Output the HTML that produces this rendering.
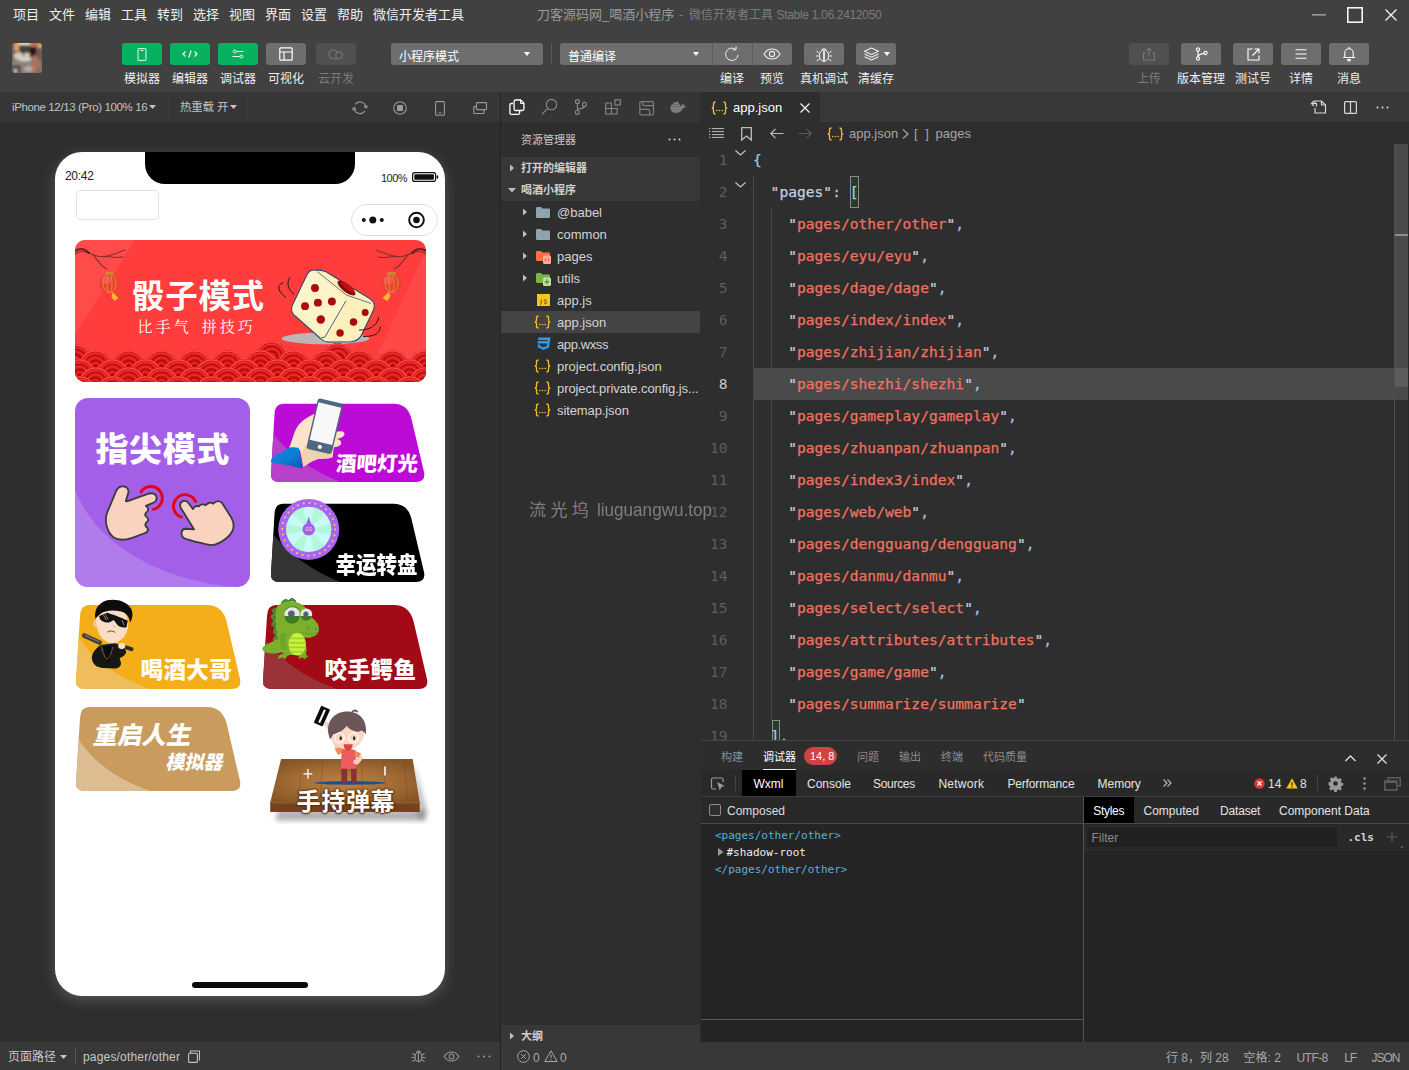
<!DOCTYPE html>
<html lang="zh-CN">
<head>
<meta charset="utf-8">
<title>微信开发者工具</title>
<style>
*{box-sizing:border-box;margin:0;padding:0}
html,body{width:1409px;height:1070px;overflow:hidden;background:#2e2e2e}
body{font-family:"Liberation Sans","Noto Sans CJK SC",sans-serif;font-size:12px;color:#e8e8e8;position:relative}
.abs{position:absolute}
.t{position:absolute;white-space:nowrap;line-height:1}
svg{position:absolute;overflow:visible}
/* top */
#menubar{position:absolute;left:0;top:0;width:1409px;height:30px;background:#414141}
#menubar .m{position:absolute;top:8px;font-size:13px;line-height:14px;color:#f0f0f0;white-space:nowrap}
#toolbar{position:absolute;left:0;top:30px;width:1409px;height:62px;background:#414141}
.btn{position:absolute;top:13px;width:40px;height:22px;border-radius:3px;background:#6e6e6e}
.btn.g{background:#07b160}
.btn.d{background:#505050}
.lbl{position:absolute;top:42px;font-size:12px;line-height:14px;color:#f0f0f0;white-space:nowrap;transform:translateX(-50%)}
.lbl.d{color:#7a7a7a}
.sel{position:absolute;top:13px;height:22px;background:#6e6e6e;border-radius:3px;font-size:12px;line-height:28px;color:#fff;padding-left:8px;white-space:nowrap}
</style>
</head>
<body>
<div id="menubar">
<span class="m" style="left:13px">项目</span>
<span class="m" style="left:49px">文件</span>
<span class="m" style="left:85px">编辑</span>
<span class="m" style="left:121px">工具</span>
<span class="m" style="left:157px">转到</span>
<span class="m" style="left:193px">选择</span>
<span class="m" style="left:229px">视图</span>
<span class="m" style="left:265px">界面</span>
<span class="m" style="left:301px">设置</span>
<span class="m" style="left:337px">帮助</span>
<span class="m" style="left:373px">微信开发者工具</span>
<span class="m" id="title" style="left:537px;color:#9a9a9a">刀客源码网_喝酒小程序</span><span class="m" id="title2" style="left:679px;color:#7c7c7c;font-size:12px">-</span><span class="m" style="left:689px;color:#7c7c7c;font-size:12px">微信开发者工具</span><span class="m" id="title3" style="left:776.500px;color:#7c7c7c;font-size:12px;letter-spacing:-0.310px">Stable 1.06.2412050</span>
<svg style="left:1312px;top:14px" width="14" height="2"><rect width="14" height="1.6" fill="#9a9a9a"/></svg>
<svg style="left:1347px;top:7px" width="16" height="16"><rect x="0.8" y="0.8" width="14.4" height="14.4" fill="none" stroke="#f4f4f4" stroke-width="1.6"/></svg>
<svg style="left:1385px;top:9px" width="12" height="12"><path d="M0.5 0.5L11.5 11.5M11.5 0.5L0.5 11.5" stroke="#f4f4f4" stroke-width="1.3" fill="none"/></svg>
</div>
<div id="toolbar">
<!-- avatar -->
<div class="abs" id="avatar" style="left:12px;top:13px;width:30px;height:30px;border-radius:3px;overflow:hidden;background:#6a5c58">
<svg style="left:0;top:0" width="30" height="30" viewBox="0 0 30 30"><defs><filter id="avb" x="-30%" y="-30%" width="160%" height="160%"><feGaussianBlur stdDeviation="1.300"/></filter></defs>
<rect width="30" height="30" fill="#6e605c"/>
<g filter="url(#avb)">
<rect x="5" y="-1" width="14" height="3" fill="#f0e6d0"/>
<rect x="2" y="0" width="5" height="8" fill="#e09a68"/>
<rect x="18" y="-1" width="9" height="5" fill="#b87048"/>
<rect x="26" y="0" width="4" height="6" fill="#e0a070"/>
<rect x="8" y="3" width="10" height="9" fill="#48403a"/>
<rect x="18" y="4" width="6" height="10" fill="#2a1614"/>
<rect x="25" y="5" width="5" height="14" fill="#6a5c54"/>
<ellipse cx="6.500" cy="13" rx="5" ry="4" fill="#d2c8bc"/>
<ellipse cx="15" cy="12" rx="3" ry="2.500" fill="#cfc4b4"/>
<path d="M0 16C6 18 14 15 21 19L21 30H0z" fill="#8c827e"/>
<ellipse cx="13" cy="16" rx="7" ry="2.500" fill="#d8d0c4"/>
<ellipse cx="17" cy="26" rx="5" ry="3" fill="#b4aa9c"/>
<path d="M21 12C26 12 28 18 27 22L25 30H20z" fill="#b07060"/>
<rect x="0" y="22" width="9" height="8" fill="#5c5254"/>
<rect x="2" y="26" width="3" height="4" fill="#c8bca4"/>
<rect x="27" y="18" width="3" height="12" fill="#8a7868"/>
</g></svg>
</div>
<!-- left buttons -->
<div class="btn g" style="left:122px"><svg style="left:15px;top:5px" width="10" height="13" viewBox="0 0 10 13"><rect x="1" y="0.600" width="8" height="11.800" rx="0.500" fill="none" stroke="#ecfaf2" stroke-width="1"/><path d="M3.500 2.600h3" stroke="#ecfaf2" stroke-width="1"/></svg></div>
<div class="btn g" style="left:170px"><svg style="left:12px;top:6px" width="16" height="10" viewBox="0 0 16 10"><path d="M3.5 2.5L1 5l2.5 2.5M12.5 2.5L15 5l-2.5 2.5M9.2 1.5L6.8 8.5" fill="none" stroke="#fff" stroke-width="1.1"/></svg></div>
<div class="btn g" style="left:218px"><svg style="left:14px;top:5px" width="12" height="12" viewBox="0 0 12 12"><path d="M4.500 3.500h7M0.500 8.500h7.200" stroke="#ecfaf2" stroke-width="1" fill="none"/><circle cx="2.800" cy="3.500" r="1.500" fill="none" stroke="#ecfaf2" stroke-width="1"/><circle cx="9.400" cy="8.500" r="1.500" fill="none" stroke="#ecfaf2" stroke-width="1"/></svg></div>
<div class="btn" style="left:266px"><svg style="left:13px;top:4px" width="14" height="14" viewBox="0 0 14 14"><rect x="0.8" y="0.8" width="12.4" height="12.4" rx="1" fill="none" stroke="#fff" stroke-width="1.2"/><path d="M0.8 5h12.4M5 5v8" stroke="#fff" stroke-width="1.2" fill="none"/></svg></div>
<div class="btn d" style="left:316px"><svg style="left:12px;top:5px" width="16" height="12" viewBox="0 0 16 12"><path d="M5.2 10.5a4.2 4.2 0 1 1 3.9-5.9 3.3 3.3 0 1 1 2.3 5.9z" fill="none" stroke="#777" stroke-width="1.1"/><path d="M9.1 4.6a3.3 3.3 0 0 0-.6 4.5" fill="none" stroke="#777" stroke-width="1.1"/></svg></div>
<span class="lbl" style="left:142px">模拟器</span>
<span class="lbl" style="left:190px">编辑器</span>
<span class="lbl" style="left:238px">调试器</span>
<span class="lbl" style="left:286px">可视化</span>
<span class="lbl d" style="left:336px">云开发</span>
<!-- selects -->
<div class="sel" style="left:391px;width:152px">小程序模式<svg style="left:133px;top:9px" width="6" height="4"><path d="M0 0h6L3 4z" fill="#fff"/></svg></div>
<div class="abs" style="left:551px;top:13px;width:1px;height:22px;background:#5a5a5a"></div>
<div class="sel" style="left:560px;width:232px">普通编译<svg style="left:133px;top:9px" width="6" height="4"><path d="M0 0h6L3 4z" fill="#fff"/></svg>
<div class="abs" style="left:152px;top:0;width:1px;height:22px;background:#5c5c5c"></div>
<div class="abs" style="left:192px;top:0;width:1px;height:22px;background:#5c5c5c"></div>
<!-- refresh -->
<svg style="left:164px;top:3px" width="16" height="16" viewBox="0 0 16 16"><path d="M14 8.800a6.200 6.200 0 1 1-2.600-5.600" fill="none" stroke="#eee" stroke-width="1"/><path d="M12 0.400v3.400h-3.400" fill="none" stroke="#eee" stroke-width="1"/></svg>
<!-- eye -->
<svg style="left:203px;top:5px" width="18" height="12" viewBox="0 0 18 12"><path d="M1 6c2-3.3 5-5 8-5s6 1.700 8 5c-2 3.300-5 5-8 5s-6-1.700-8-5z" fill="none" stroke="#eee" stroke-width="1.1"/><circle cx="9" cy="6" r="2.600" fill="none" stroke="#eee" stroke-width="1.1"/></svg>
</div>
<div class="btn" style="left:804px"><svg style="left:11px;top:3px" width="18" height="17" viewBox="0 0 18 17"><ellipse cx="9" cy="9.700" rx="4.500" ry="5.800" fill="none" stroke="#f0f0f0" stroke-width="1"/><path d="M9 4v11.500M6.300 4.800a2.800 2.800 0 0 1 5.400 0M4.700 7.500L1.500 5M4.500 10H1M4.800 12.800L1.500 15M13.300 7.500L16.500 5M13.500 10H17M13.200 12.800L16.500 15" fill="none" stroke="#f0f0f0" stroke-width="1"/><path d="M9 5v10" stroke="#f0f0f0" stroke-width="1.600"/></svg></div>
<div class="btn" style="left:856px"><svg style="left:7px;top:4px" width="17" height="14" viewBox="0 0 17 14"><path d="M8.500 1L15.500 4.200 8.500 7.400 1.500 4.200z" fill="none" stroke="#eee" stroke-width="1.1" stroke-linejoin="round"/><path d="M1.500 7L8.500 10.200 15.500 7M1.500 9.800L8.500 13 15.500 9.800" fill="none" stroke="#eee" stroke-width="1.1" stroke-linejoin="round"/></svg><svg style="left:28px;top:9px" width="6" height="4"><path d="M0 0h6L3 4z" fill="#fff"/></svg></div>
<span class="lbl" style="left:732px">编译</span>
<span class="lbl" style="left:772px">预览</span>
<span class="lbl" style="left:824px">真机调试</span>
<span class="lbl" style="left:876px">清缓存</span>
<!-- right buttons -->
<div class="btn d" style="left:1129px"><svg style="left:13px;top:4px" width="14" height="14" viewBox="0 0 14 14"><path d="M4 6H1.500v7h11V6H10M7 9.500V1.200M4.300 3.800L7 1.200l2.700 2.600" fill="none" stroke="#777" stroke-width="1.1"/></svg></div>
<div class="btn" style="left:1181px"><svg style="left:14px;top:4px" width="13" height="14" viewBox="0 0 13 14"><circle cx="3" cy="2.500" r="1.600" fill="none" stroke="#fff" stroke-width="1.100"/><circle cx="3" cy="11.500" r="1.600" fill="none" stroke="#fff" stroke-width="1.100"/><circle cx="10.500" cy="6" r="1.600" fill="none" stroke="#fff" stroke-width="1.100"/><path d="M3 4.100v5.800M3 9.900c0-2.500 3-3 6-3.500" fill="none" stroke="#fff" stroke-width="1.100"/></svg></div>
<div class="btn" style="left:1233px"><svg style="left:14px;top:5px" width="13" height="13" viewBox="0 0 13 13"><path d="M5.500 1H1v11h11V7.500" fill="none" stroke="#fff" stroke-width="1.100"/><path d="M7.500 1H12v4.500M12 1L5.500 7.500" fill="none" stroke="#fff" stroke-width="1.100"/></svg></div>
<div class="btn" style="left:1281px"><svg style="left:14px;top:6px" width="12" height="10" viewBox="0 0 12 10"><path d="M0.500 0.800h11M0.500 5h11M0.500 9.200h11" stroke="#fff" stroke-width="1.100"/></svg></div>
<div class="btn" style="left:1329px"><svg style="left:13px;top:3px" width="14" height="16" viewBox="0 0 14 16"><path d="M2.800 11.500V7a4.200 4.200 0 0 1 8.400 0v4.500M1 11.500h12M7 2.800V1M5.800 13.500h2.400v1.300H5.800z" fill="none" stroke="#fff" stroke-width="1.100"/></svg></div>
<span class="lbl d" style="left:1149px">上传</span>
<span class="lbl" style="left:1201px">版本管理</span>
<span class="lbl" style="left:1253px">测试号</span>
<span class="lbl" style="left:1301px">详情</span>
<span class="lbl" style="left:1349px">消息</span>
</div>
<style>
#simbar{position:absolute;left:0;top:92px;width:500px;height:30px;background:#363636}
#simbar .t{font-size:12px;color:#c4c4c4;top:9px}
#sim{position:absolute;left:0;top:122px;width:500px;height:920px;background:#2e2e2e;overflow:hidden}
#phone{position:absolute;left:55px;top:30px;width:390px;height:844px;border-radius:27px;background:#fff;box-shadow:0 4px 14px rgba(255,255,255,.2);overflow:hidden;color:#222}
#simfoot{position:absolute;left:0;top:1042px;width:500px;height:28px;background:#383838}
#simfoot .t{font-size:12px;color:#c8c8c8;top:9px}
.ct{position:absolute;white-space:nowrap;color:#fff;font-family:"Liberation Sans","Noto Sans CJK SC",sans-serif;font-weight:900;line-height:1}
.wv{position:absolute;left:0;width:400px;height:33px;background-size:33px 33px;background-repeat:repeat-x;background-image:radial-gradient(circle 16.500px at 16.500px 16.500px,#9c0808 0,#c40e0e 2px,#ec2c2c 3.500px,#c20c0c 5.500px,#b80a0a 6.500px,#ee3030 8.500px,#cc1010 10.500px,#c00c0c 11.500px,#f03434 13px,#d81414 14.500px,#ff5c54 15.500px,#e82222 16.400px,rgba(0,0,0,0) 16.600px)}
</style>
<div id="simbar">
<span class="t" style="left:12px;font-size:11.500px;letter-spacing:-0.380px;top:9.500px" id="devname">iPhone 12/13 (Pro) 100% 16</span>
<svg style="left:149px;top:13px" width="7" height="4"><path d="M0 0h7L3.500 4z" fill="#c4c4c4"/></svg>
<div class="abs" style="left:168px;top:0;width:1px;height:30px;background:#3b3b3b"></div>
<span class="t" style="left:180px;font-size:11.500px;letter-spacing:-0.200px;top:9.500px">热重载 开</span>
<svg style="left:229.500px;top:13px" width="7" height="4"><path d="M0 0h7L3.500 4z" fill="#c4c4c4"/></svg>
<div class="abs" style="left:247px;top:0;width:1px;height:30px;background:#3b3b3b"></div>
<!-- refresh -->
<svg style="left:0;top:0" width="500" height="30" viewBox="0 0 500 30" fill="none"><path d="M355.200 12.400A6 6 0 0 1 366 15.800M364.800 19.200A6 6 0 0 1 354 15.800" stroke="#9a9a9a" stroke-width="1.100"/><path d="M366 16.200l-2-2.400M366 16.200l1.600-2.600M354 15.400l2 2.400M354 15.400l-1.600 2.600" stroke="#9a9a9a" stroke-width="1.100"/></svg>
<!-- stop -->
<svg style="left:393px;top:9px" width="14" height="14" viewBox="0 0 14 14"><circle cx="7" cy="7" r="6.300" fill="none" stroke="#9a9a9a" stroke-width="1.100"/><rect x="4" y="4" width="6" height="6" rx="1" fill="#9a9a9a"/></svg>
<!-- phone -->
<svg style="left:435px;top:8.500px" width="10" height="15" viewBox="0 0 10 15"><rect x="0.600" y="0.600" width="8.800" height="13.600" rx="1" fill="none" stroke="#9a9a9a" stroke-width="1.100"/><path d="M3.500 12h3" stroke="#9a9a9a" stroke-width="1.100"/></svg>
<!-- windows -->
<svg style="left:0;top:0" width="500" height="30" viewBox="0 0 500 30" fill="none"><rect x="476.500" y="10.600" width="10" height="7" rx="0.800" stroke="#9a9a9a" stroke-width="1.100"/><path d="M476.500 14.600H474.600Q473.800 14.600 473.800 15.400V20.700Q473.800 21.500 474.600 21.500H483.200Q484 21.500 484 20.700V17.600" stroke="#9a9a9a" stroke-width="1.100"/></svg>
</div>
<div id="sim">
<div id="phone">
<!-- notch -->
<div class="abs" style="left:90px;top:0;width:210px;height:32px;background:#000;border-radius:0 0 20px 20px"></div>
<span class="t" style="left:10px;top:18px;font-size:12px;color:#222;letter-spacing:-0.3px">20:42</span>
<span class="t" style="left:326px;top:20.500px;font-size:11px;color:#222;letter-spacing:-0.550px">100%</span>
<svg style="left:357px;top:20px" width="27" height="10" viewBox="0 0 27 10"><rect x="0.600" y="0.600" width="23" height="8.800" rx="2.200" fill="none" stroke="#111" stroke-width="1.200"/><rect x="2.300" y="2.300" width="19.600" height="5.400" rx="1" fill="#111"/><rect x="24.600" y="3.300" width="1.600" height="3.400" rx="0.800" fill="#111"/></svg>
<!-- nav -->
<div class="abs" style="left:21px;top:38px;width:83px;height:30px;border:1px solid #e4e4e4;border-radius:4px"></div>
<div class="abs" style="left:296px;top:52px;width:87px;height:32px;border:1px solid #e0e0e0;border-radius:16px;background:#fff"></div>
<svg style="left:296px;top:52px" width="87" height="32" viewBox="0 0 87 32"><circle cx="12.800" cy="16" r="2" fill="#111"/><circle cx="21.800" cy="16" r="3.500" fill="#111"/><circle cx="30.800" cy="16" r="2" fill="#111"/><circle cx="65.500" cy="16" r="7.300" fill="none" stroke="#111" stroke-width="2"/><circle cx="65.500" cy="16" r="3.300" fill="#111"/></svg>
<!-- banner -->
<div class="abs" id="banner" style="left:20px;top:88px;width:351px;height:142px;border-radius:10px;background:#ff3d3d;overflow:hidden">
<svg style="left:0;top:0" width="351" height="142" viewBox="0 0 351 142">
<path d="M0 0H60L0 95z" fill="#ff5250" opacity=".7"/>
<path d="M351 10L290 142H351z" fill="#ff5250" opacity=".6"/>
<!-- branches -->
<path d="M0 14c8-6 14 0 22 2s18-2 28-6M18 15c6 6 8 12 14 14M28 17c6-2 12 2 20 0" fill="none" stroke="#6a2a22" stroke-width="1.100" stroke-linecap="round" opacity=".8"/>
<path d="M0 11c6-4 10-2 14 2" fill="none" stroke="#4a1a16" stroke-width="2" stroke-linecap="round" opacity=".85"/>
<path d="M351 14c-8-6-14 0-22 2s-18-2-28-6M333 15c-6 6-8 12-14 14M323 17c-6-2-12 2-20 0" fill="none" stroke="#6a2a22" stroke-width="1.100" stroke-linecap="round" opacity=".8"/>
<path d="M351 11c-6-4-10-2-14 2" fill="none" stroke="#4a1a16" stroke-width="2" stroke-linecap="round" opacity=".85"/>
<!-- lanterns -->
<g transform="translate(34.500,43)"><ellipse cx="0" cy="0" rx="10.500" ry="9.500" fill="#e8432c"/><ellipse cx="0" cy="0" rx="6.500" ry="9.500" fill="none" stroke="#f2934a" stroke-width="0.800"/><ellipse cx="0" cy="0" rx="2.500" ry="9.500" fill="none" stroke="#f2934a" stroke-width="0.800"/><ellipse cx="-3" cy="-3" rx="5" ry="4" fill="#f4705a" opacity=".6"/><rect x="-4" y="-11" width="8" height="2.500" fill="#c98a2a"/><path d="M3 9l6 6-4 3-3-4z" fill="#f7b733"/></g>
<g transform="translate(316.500,43)"><ellipse cx="0" cy="0" rx="10.500" ry="9.500" fill="#e8432c"/><ellipse cx="0" cy="0" rx="6.500" ry="9.500" fill="none" stroke="#f2934a" stroke-width="0.800"/><ellipse cx="0" cy="0" rx="2.500" ry="9.500" fill="none" stroke="#f2934a" stroke-width="0.800"/><ellipse cx="-3" cy="-3" rx="5" ry="4" fill="#f4705a" opacity=".6"/><rect x="-4" y="-11" width="8" height="2.500" fill="#c98a2a"/><path d="M-3 9l-6 6 5 3 3-5z" fill="#f7b733"/></g>
<!-- dice -->
<g transform="translate(195,20) scale(0.11679)">
<ellipse cx="475" cy="672" rx="375" ry="50" fill="#bab6b6"/>
<path d="M390 88C350 80 330 100 315 130L195 380C180 410 180 440 200 465L430 670C450 690 470 700 500 702L690 700C730 698 760 680 780 650L880 440C900 400 895 360 860 335L480 100C450 85 420 85 390 88Z" fill="#fbf0bc" stroke="#27407a" stroke-width="9" stroke-linejoin="round"/>
<path d="M400 100L650 350L470 660L215 440C195 420 195 400 205 380L320 135C340 100 370 92 400 100Z" fill="#fdf4cc"/>
<path d="M650 350L470 660M470 660L440 665" fill="none" stroke="#27407a" stroke-width="7"/>
<path d="M405 100L655 300L865 372" fill="none" stroke="#27407a" stroke-width="6"/>
<ellipse cx="655" cy="240" rx="95" ry="34" transform="rotate(38 655 240)" fill="#8a0808"/>
<ellipse cx="665" cy="232" rx="70" ry="20" transform="rotate(38 665 232)" fill="#c01010"/>
<g fill="#a80c0c"><circle cx="385" cy="240" r="34"/><circle cx="300" cy="395" r="34"/><circle cx="410" cy="365" r="34"/><circle cx="530" cy="355" r="34"/><circle cx="435" cy="510" r="36"/><circle cx="815" cy="450" r="30"/><circle cx="715" cy="530" r="32"/><circle cx="600" cy="625" r="32"/></g>
<path d="M170 150C140 190 150 250 205 295M110 195C50 220 70 270 135 320M930 490C920 560 860 600 765 600M945 575C935 640 880 655 800 655" fill="none" stroke="#2a0e0e" stroke-width="8" stroke-linecap="round"/>
</g>
</svg>
<div class="wv" style="top:101px;left:180px;width:33px"></div>
<div class="wv" style="top:103px;left:246px;width:33px"></div>
<div class="wv" style="top:104px;left:-16px;width:33px"></div>
<div class="wv" style="top:110px;left:-29px"></div>
<div class="wv" style="top:118.500px;left:-12.500px"></div>
<div class="wv" style="top:127px;left:-29px"></div>
<div class="wv" style="top:135.500px;left:-12.500px"></div>
<span class="ct" style="left:57px;top:40.500px;font-size:32.500px;letter-spacing:0.700px;font-weight:700">骰子模式</span>
<span class="ct" style="left:62.500px;top:80px;font-size:15px;font-weight:400;letter-spacing:3.100px;font-family:'Liberation Serif','Noto Serif CJK SC',serif;word-spacing:3px">比手气 拼技巧</span>
</div>
<!-- purple card -->
<div class="abs" style="left:20px;top:246px;width:175px;height:189px;border-radius:13px;background:#a35fe8;overflow:hidden">
<svg style="left:0;top:0" width="175" height="189" viewBox="0 0 175 189">
<path d="M0 91C20 148 90 184 162 189H0z" fill="#b07cec"/>
<!-- hands -->
<g transform="translate(20,77) scale(0.10646)" stroke-linejoin="round" stroke-linecap="round">
<path d="M432 160A108 108 0 1 1 547 322" fill="none" stroke="#e60012" stroke-width="27"/>
<path d="M945 250A108 108 0 1 0 812 395" fill="none" stroke="#e60012" stroke-width="27"/>
<path d="M290 245L312 170C325 120 280 100 240 110C215 118 205 135 195 160L115 350C85 430 110 540 180 590C230 620 290 610 350 590L470 545C500 535 505 510 485 490C465 475 470 455 490 440C505 425 500 400 480 390C465 380 470 355 490 345C505 330 500 300 478 290L545 262C590 245 590 190 550 175C530 168 510 172 490 180L300 248Z" fill="#f9d2c0" stroke="#3a3a3a" stroke-width="17"/>
<path d="M920 320L880 265C860 235 810 235 800 275C795 295 805 310 815 325L930 510L850 505C810 505 800 560 830 590C850 605 900 615 960 630L1060 655C1120 670 1180 640 1240 590C1310 530 1320 470 1280 400L1195 265C1180 240 1140 235 1110 270C1090 255 1060 255 1040 285C1020 270 990 275 975 295C955 285 930 295 920 320Z" fill="#f9d2c0" stroke="#3a3a3a" stroke-width="17"/>
</g>
</svg>
<span class="ct" style="left:20.500px;top:34.500px;font-size:33px;letter-spacing:0.600px">指尖模式</span>
</div>
<!-- jiuba card -->
<svg style="left:215px;top:240px" width="160" height="96" viewBox="0 0 160 96">
<defs><clipPath id="cp1"><path d="M13 11.700H124Q137 12 141 25L154 80Q156 90 146 90H9Q0.500 90 1 82L4.500 22Q5 11.700 13 11.700Z"/></clipPath>
<linearGradient id="slv" x1="0" y1="0" x2="1" y2="1"><stop offset="0" stop-color="#0a86dc"/><stop offset="0.550" stop-color="#0a7fd2"/><stop offset="1" stop-color="#0a50b0"/></linearGradient></defs>
<g clip-path="url(#cp1)"><rect width="160" height="96" fill="#bd0bd7"/><path d="M0 38Q25 72 70 90H0z" fill="#b741cb"/></g>
<g transform="scale(0.12066) translate(-41.400,0)">
<path d="M200 460C230 400 240 300 300 250C340 215 380 195 410 180L440 250L600 330C640 315 670 335 655 360C640 380 610 385 590 390C630 395 640 420 625 440C610 455 585 455 570 460L560 540C520 555 480 550 440 555C400 565 360 590 320 620L290 480Z" fill="#fde4c8"/>
<path d="M330 440L560 510L560 540C520 555 480 550 440 555C400 565 360 590 320 620L300 520Z" fill="#f0d2b0"/>
<path d="M345 300C360 270 390 250 410 250L400 290C380 290 360 300 345 300Z" fill="#b741cb" opacity="0"/>
<path d="M50 570C60 530 100 505 140 505C160 470 220 445 280 465L312 632L50 582Z" fill="url(#slv)"/>
<g transform="rotate(13.400 440 50)"><rect x="440" y="50" width="216" height="430" rx="26" fill="#4f6781"/><rect x="452" y="84" width="192" height="318" fill="#f8f8f8"/><circle cx="548" cy="441" r="17" fill="#f4f4f4"/></g>
</g>
</svg>
<span class="ct" style="left:280.500px;top:301.500px;font-size:20.500px;letter-spacing:0;transform:skewX(-4deg)">酒吧灯光</span>
<!-- zhuanpan card -->
<svg style="left:215px;top:340px" width="160" height="92" viewBox="0 0 160 92">
<defs><clipPath id="cp2"><path d="M13 11.700H124Q137 12 141 25L154 80Q156 90 146 90H9Q0.500 90 1 82L4.500 22Q5 11.700 13 11.700Z"/></clipPath></defs>
<g clip-path="url(#cp2)"><rect width="160" height="92" fill="#000"/><path d="M0 38Q25 72 70 90H0z" fill="#343434"/></g>
<circle cx="38.7" cy="37.4" r="30.500" fill="#a866f2"/>
<circle cx="38.7" cy="37.4" r="26.400" fill="none" stroke="#f5d648" stroke-width="1.900" stroke-dasharray="0.100 5.824" stroke-linecap="round"/>
<circle cx="38.7" cy="37.4" r="22.600" fill="#c8fbf6"/>
<g fill="#b2f7dc"><path d="M38.7 37.4L44.5 15.6A22.6 22.6 0 0 1 54.7 21.4z"/><path d="M38.7 37.4L60.5 31.6A22.6 22.6 0 0 1 60.5 43.2z"/><path d="M38.7 37.4L54.7 53.4A22.6 22.6 0 0 1 44.5 59.2z"/><path d="M38.7 37.4L32.9 59.2A22.6 22.6 0 0 1 22.7 53.4z"/><path d="M38.7 37.4L16.9 43.2A22.6 22.6 0 0 1 16.9 31.6z"/><path d="M38.7 37.4L22.7 21.4A22.6 22.6 0 0 1 32.9 15.6z"/></g>
<path d="M38.7 24.500l2.600 8.500h-5.200z" fill="#9c58ec"/><circle cx="38.7" cy="37.4" r="6.200" fill="#a45ef0"/>
<text x="38.7" y="39.200" font-size="4.500" font-weight="700" fill="#e8c890" text-anchor="middle" font-family="Liberation Sans,sans-serif">GO</text>
</svg>
<span class="ct" style="left:280.500px;top:402px;font-size:20.500px;transform-origin:0 0;transform:scaleY(1.130)">幸运转盘</span>
<!-- dage card -->
<svg style="left:21px;top:445px" width="170" height="96" viewBox="0 0 170 96">
<defs><clipPath id="cp3"><path d="M13 8H131Q146 8 150.500 24L164 82Q166 92 156 92H9Q-0.500 92 0 84L4 19Q4.500 8 13 8Z"/></clipPath></defs>
<g clip-path="url(#cp3)"><rect width="170" height="96" fill="#f4ae1a"/><path d="M0 36Q22 74 74 92H0z" fill="#efbe5a"/></g>
<g transform="translate(-6,-2) scale(0.12775)">
<path d="M112 318L232 372" stroke="#3c3c3c" stroke-width="36" stroke-linecap="round"/>
<path d="M120 318L228 366" stroke="#7a7a7a" stroke-width="10" stroke-linecap="round"/>
<path d="M400 398L482 424" stroke="#2e2e2e" stroke-width="30" stroke-linecap="round"/>
<path d="M240 392C200 420 175 450 170 490C172 520 185 545 210 560L250 572L360 576C385 570 400 555 400 535L388 495C420 480 440 465 440 445L420 400L350 378Z" fill="#171717"/>
<path d="M262 400L300 560L325 400Z" fill="#0a0a0a"/>
<path d="M246 402C255 450 270 490 292 502C315 480 328 440 336 408" fill="none" stroke="#c79a3a" stroke-width="7" stroke-dasharray="6 4"/>
<ellipse cx="405" cy="400" rx="28" ry="24" fill="#fbdcc4"/>
<path d="M200 200C180 200 175 240 200 260Z" fill="#f5cdb2"/>
<path d="M200 190C195 120 250 90 330 95C410 100 465 150 455 250C450 310 400 370 330 378C260 375 205 300 200 190Z" fill="#fbdcc4"/>
<path d="M198 185C190 120 215 65 290 42C360 25 450 50 480 110C495 150 490 185 470 215C465 170 440 140 400 130C340 115 270 120 235 150C215 165 205 180 198 185Z" fill="#0c0c0c"/>
<path d="M228 165L292 138C330 150 400 175 452 200L442 252C415 258 385 250 370 232L342 196C330 205 315 214 298 216C270 218 248 205 235 190Z" fill="#111"/>
<path d="M262 158L285 196M275 152L298 190" stroke="#fff" stroke-width="5" opacity=".8"/>
<path d="M405 195L425 238" stroke="#fff" stroke-width="5" opacity=".8"/>
<path d="M292 290C305 278 335 278 352 292" fill="none" stroke="#3a2a22" stroke-width="6" stroke-linecap="round"/>
<path d="M335 240C340 250 350 252 358 248" fill="none" stroke="#c9a58c" stroke-width="5"/>
</g>
</svg>
<span class="ct" style="left:85.500px;top:508px;font-size:22.500px;letter-spacing:0.400px">喝酒大哥</span>
<!-- eyu card -->
<svg style="left:204px;top:445px" width="174" height="96" viewBox="0 0 174 96">
<defs><clipPath id="cp4"><path d="M17 8H135Q150 8 154.500 24L168 82Q170 92 160 92H13Q3.500 92 4 84L8 19Q8.500 8 17 8Z"/></clipPath></defs>
<g clip-path="url(#cp4)"><rect width="174" height="96" fill="#a20a16"/><path d="M0 34Q26 74 78 92H0z" fill="#9b323a"/></g>
<g transform="translate(-4,-2) scale(0.12775)">
<path d="M215 60L240 40L262 52L290 32L312 50M168 110L140 120L158 150L132 170L156 200L138 230L165 255L150 290L172 315L150 345L160 370L125 385L110 410" fill="none" stroke="#3f8f3a" stroke-width="22" stroke-linejoin="round" stroke-linecap="round"/>
<path d="M60 410C80 380 130 380 170 340L260 420C220 460 120 470 75 445C60 435 55 420 60 410Z" fill="#7aae2c"/>
<path d="M170 95C200 50 290 30 360 70C400 95 420 130 430 170C470 190 505 230 500 275C495 315 450 335 400 335L360 330C400 380 420 440 390 470L250 470C200 450 170 400 175 330C160 250 150 150 170 95Z" fill="#7cb02c"/>
<path d="M200 300C190 350 195 400 215 430L245 425C235 390 235 340 245 300Z" fill="#6fa428"/>
<path d="M190 470L175 500L215 490L235 505L250 480L270 470L240 450ZM345 470L340 500L370 490L395 505L400 485L420 490L395 455Z" fill="#78ac2a"/>
<ellipse cx="330" cy="385" rx="68" ry="88" fill="#c9f23e"/>
<path d="M272 340H388M264 375H396M266 410H394M278 445H382" stroke="#9ad82c" stroke-width="14"/>
<circle cx="290" cy="150" r="60" fill="#e4e8ea"/><circle cx="402" cy="152" r="46" fill="#e4e8ea"/>
<circle cx="285" cy="148" r="26" fill="#5a5f78"/><circle cx="398" cy="150" r="20" fill="#5a5f78"/>
<path d="M230 165A60 60 0 0 0 350 165ZM357 165A46 46 0 0 0 447 165Z" fill="#3f7a24"/>
<path d="M236 120C260 85 320 80 345 115" fill="none" stroke="#5d9224" stroke-width="10"/>
<circle cx="420" cy="262" r="9" fill="#4a8f5a"/><circle cx="475" cy="266" r="9" fill="#4a8f5a"/>
<path d="M370 295C410 310 460 310 490 290" fill="none" stroke="#5d9224" stroke-width="6"/>
</g>
</svg>
<span class="ct" style="left:269.500px;top:507.500px;font-size:22.500px;letter-spacing:0.500px">咬手鳄鱼</span>
<!-- chongqi card -->
<svg style="left:21px;top:547px" width="170" height="96" viewBox="0 0 170 96">
<defs><clipPath id="cp5"><path d="M13 8H131Q146 8 150.500 24L164 82Q166 92 156 92H9Q-0.500 92 0 84L4 19Q4.500 8 13 8Z"/></clipPath></defs>
<g clip-path="url(#cp5)"><rect width="170" height="96" fill="#c99c5e"/><path d="M0 36Q22 74 74 92H0z" fill="#ddbc92"/></g>
</svg>
<span class="ct" style="left:39px;top:572px;font-size:24.500px;letter-spacing:0;transform:skewX(-12deg)">重启人生</span>
<span class="ct" style="left:112px;top:601px;font-size:19px;letter-spacing:0;transform:skewX(-12deg)">模拟器</span>
<!-- danmu -->
<svg style="left:210px;top:540px" width="180" height="140" viewBox="0 0 180 140">
<defs><radialGradient id="wd" cx="0.500" cy="0.550" r="0.600"><stop offset="0" stop-color="#bb8444"/><stop offset="0.600" stop-color="#a06a34"/><stop offset="1" stop-color="#875628"/></radialGradient><filter id="bl" x="-20%" y="-20%" width="140%" height="140%"><feGaussianBlur stdDeviation="22"/></filter></defs>
<g transform="translate(-5,3) scale(0.12775)">
<path d="M140 900H1290V985H120z" fill="#666" opacity=".5" filter="url(#bl)"/>
<path d="M1200 520L1310 900L1290 980L1230 960z" fill="#666" opacity=".4" filter="url(#bl)"/>
<path d="M165 500H1195L1250 840H80z" fill="url(#wd)"/>
<path d="M80 840H1250V915H80z" fill="#74431a"/>
<path d="M80 840H1250V852H80z" fill="#8a5424"/>
<path d="M490 500L470 840M800 500L800 840M968 500L990 840M1130 500L1155 840M320 620L300 840" stroke="#7a4c22" stroke-width="6" opacity=".6"/>
<ellipse cx="705" cy="688" rx="280" ry="14" fill="#1f4f8a"/>
<path d="M635 570H682V680Q660 695 637 680zM712 570H756V680Q735 695 714 680z" fill="#8a3132"/>
<path d="M598 440L520 250L490 225L510 200L545 225L640 410z" fill="#fbd0b8"/>
<path d="M585 420L650 400L670 440L610 470z" fill="#f08a5a"/>
<path d="M640 425C680 415 720 420 750 435L752 578H632z" fill="#ee5c60"/>
<path d="M745 440C790 450 810 480 795 510L770 540C750 550 730 540 730 520C735 505 750 500 765 500L750 470z" fill="#fbd0b8"/>
<path d="M745 438L790 455L770 495L745 480z" fill="#f08a5a"/>
<circle cx="680" cy="290" r="135" fill="#fbd5c0"/>
<path d="M535 300C520 200 590 130 680 130C780 130 845 200 828 310C815 280 790 270 770 290C720 280 690 260 680 240C650 280 610 300 575 305C560 330 550 350 545 340Z" fill="#6b5658"/>
<path d="M720 140C725 120 745 115 760 130" fill="none" stroke="#6b5658" stroke-width="14" stroke-linecap="round"/>
<circle cx="622" cy="335" r="38" fill="none" stroke="#fff" stroke-width="9"/><circle cx="732" cy="335" r="38" fill="none" stroke="#fff" stroke-width="9"/>
<ellipse cx="632" cy="338" rx="9" ry="16" fill="#2a2222"/><ellipse cx="737" cy="338" rx="9" ry="16" fill="#2a2222"/>
<path d="M655 385H725C725 420 705 435 690 435S655 420 655 385z" fill="#d9453f"/>
<g transform="rotate(24 485 165)"><rect x="440" y="85" width="90" height="160" rx="10" fill="#fff"/><rect x="447" y="92" width="76" height="146" rx="6" fill="#0a0a0a"/><rect x="478" y="110" width="16" height="110" fill="#fff"/></g>
<path d="M375 580V656M340 618H410" stroke="#fff" stroke-width="10"/><path d="M978 560V630" stroke="#fff" stroke-width="12"/>
</g>
</svg>
<span class="ct" style="left:241.500px;top:637.500px;font-size:24px;letter-spacing:0.700px;font-weight:700;text-shadow:0 0 2px #5a3210,0 1px 2px #5a3210,1px 0 2px #5a3210,-1px 0 2px #5a3210">手持弹幕</span>
<!-- home indicator -->
<div class="abs" style="left:137px;top:830px;width:116px;height:5.500px;border-radius:3px;background:#0a0a0a"></div>
</div>
</div>
<div id="simfoot">
<span class="t" style="left:8px">页面路径</span>
<svg style="left:60px;top:13px" width="7" height="4"><path d="M0 0h7L3.500 4z" fill="#c4c4c4"/></svg>
<div class="abs" style="left:75px;top:7px;width:1px;height:14px;background:#5a5a5a"></div>
<span class="t" style="left:83px;letter-spacing:0.180px" id="pp">pages/other/other</span>
<svg style="left:188px;top:8px" width="12" height="13" viewBox="0 0 12 13"><path d="M2.500 3V1h9v9.500" fill="none" stroke="#c4c4c4" stroke-width="1.100"/><rect x="0.600" y="3.200" width="8.800" height="9.200" rx="1" fill="none" stroke="#c4c4c4" stroke-width="1.100"/></svg>
<svg style="left:410px;top:6px" width="17" height="16" viewBox="0 0 18 16"><ellipse cx="9" cy="9" rx="3.600" ry="5" fill="none" stroke="#9a9a9a" stroke-width="1.100"/><path d="M9 4v10M6.800 4.300a2.300 2.300 0 0 1 4.400 0M5.400 7L2.500 5.200M5.400 9.500H1.500M5.600 12l-3 2M12.600 7l2.900-1.800M12.600 9.500h3.900M12.400 12l3 2" fill="none" stroke="#9a9a9a" stroke-width="1.100"/></svg>
<svg style="left:443px;top:9px" width="17" height="11" viewBox="0 0 18 12"><path d="M1 6c2-3.300 5-5 8-5s6 1.700 8 5c-2 3.300-5 5-8 5s-6-1.700-8-5z" fill="none" stroke="#9a9a9a" stroke-width="1.100"/><circle cx="9" cy="6" r="2.600" fill="none" stroke="#9a9a9a" stroke-width="1.100"/></svg>
<svg style="left:477px;top:13px" width="14" height="3" viewBox="0 0 14 3"><circle cx="1.500" cy="1.500" r="1" fill="#9a9a9a"/><circle cx="7" cy="1.500" r="1" fill="#9a9a9a"/><circle cx="12.500" cy="1.500" r="1" fill="#9a9a9a"/></svg>
</div>
<style>
#vdiv{position:absolute;left:500px;top:92px;width:1px;height:978px;background:#222}
#side{position:absolute;left:501px;top:92px;width:199px;height:950px;background:#2e2e2e;overflow:hidden}
#actbar{position:absolute;left:0;top:0;width:199px;height:30px;background:#353535}
.sec{position:absolute;left:0;width:199px;height:22px;background:#383838}
.sec span{position:absolute;left:20px;top:4.500px;font-size:11px;font-weight:700;color:#d0d0d0;line-height:12px;white-space:nowrap}
.row{position:absolute;left:0;width:199px;height:22px}
.row span{position:absolute;left:56px;top:4px;font-size:13px;line-height:16px;color:#d4d4d4;white-space:nowrap}
.row.selr{background:#444}
.jb{position:absolute;left:33px;top:3.500px;width:17px;height:14px}
</style>
<div id="vdiv"></div>
<div id="side">
<div id="actbar">
<svg style="left:0;top:0" width="199" height="30" viewBox="0 0 199 30" fill="none">
<!-- files (active) -->
<path d="M12 11.500H10.400a1.500 1.500 0 0 0-1.500 1.500v7.900a1.500 1.500 0 0 0 1.500 1.500h6.700a1.500 1.500 0 0 0 1.500-1.500V18.500" stroke="#fff" stroke-width="1.300"/>
<path d="M14.600 8h5l3.300 3.300v5.700a1.500 1.500 0 0 1-1.500 1.500h-6.800a1.500 1.500 0 0 1-1.500-1.500V9.500a1.500 1.500 0 0 1 1.500-1.500z" stroke="#fff" stroke-width="1.300"/>
<path d="M19.500 8v3.500H23" stroke="#fff" stroke-width="1"/>
<!-- search -->
<circle cx="50.500" cy="12.600" r="5.200" stroke="#8a8a8a" stroke-width="1.100"/><path d="M46.900 16.400L40.800 22.400" stroke="#8a8a8a" stroke-width="1.200"/>
<!-- git -->
<circle cx="76.400" cy="9.600" r="2" stroke="#8a8a8a" stroke-width="1.100"/><circle cx="76.400" cy="20.300" r="2" stroke="#8a8a8a" stroke-width="1.100"/><circle cx="83.500" cy="12.400" r="2" stroke="#8a8a8a" stroke-width="1.100"/>
<path d="M76.400 11.600v6.700M83.500 14.400c0 2.800-7.100 1.200-7.100 3.900" stroke="#8a8a8a" stroke-width="1.100"/>
<!-- extensions -->
<path d="M104.700 11H110.400V22M104.700 11V22H116.200V16.500H104.700" stroke="#8a8a8a" stroke-width="1.100"/>
<rect x="113.900" y="7.800" width="5.400" height="5.200" stroke="#8a8a8a" stroke-width="1.100"/>
<!-- save -->
<rect x="138.800" y="9.700" width="13.700" height="13.200" rx="1.300" stroke="#7e7e7e" stroke-width="1.200"/>
<path d="M141.700 9.700V12.200Q141.700 13.700 144.600 13.700H152.500M138.800 17.300H146.800Q148.700 17.300 148.700 19V22.900" stroke="#7e7e7e" stroke-width="1.200"/>
<!-- docker -->
<path d="M169.200 14.300H180.200C180.700 12.800 181.200 12 182 11.600 182.700 12.600 182.900 13.200 182.800 13.900 183.500 13.700 184.300 13.800 184.900 14.200 184.300 15.300 183.400 15.700 182.300 15.700 181.200 18.700 178.700 20.900 175 20.900 171.300 20.900 169.300 18.600 169.200 14.300z" fill="#7e7e7e"/>
<path d="M170.400 12.300h8.800v1.600h-8.800zM172.400 10.600h5.500v1.400h-5.500zM175.500 9.200h1.600v1.200h-1.600z" fill="#7e7e7e"/>
</svg>
</div>
<span class="t" style="left:20px;top:42.500px;font-size:11px;color:#c8c8c8">资源管理器</span>
<svg style="left:167px;top:46px" width="13" height="3" viewBox="0 0 13 3"><circle cx="1.500" cy="1.500" r="1" fill="#d0d0d0"/><circle cx="6.500" cy="1.500" r="1" fill="#d0d0d0"/><circle cx="11.500" cy="1.500" r="1" fill="#d0d0d0"/></svg>
<div class="sec" style="top:65px"><svg style="left:8.500px;top:7px" width="5" height="8"><path d="M0 0.500L4 4 0 7.500z" fill="#c0c0c0"/></svg><span>打开的编辑器</span></div>
<div class="sec" style="top:87px"><svg style="left:7px;top:9px" width="8" height="5"><path d="M0 0H8L4 4.500z" fill="#c0c0c0"/></svg><span>喝酒小程序</span></div>
<!-- tree -->
<div class="row" style="top:109px"><svg style="left:21.500px;top:7px" width="5" height="8"><path d="M0 0.500L4 4 0 7.500z" fill="#c0c0c0"/></svg><svg style="left:35px;top:6px" width="14" height="11" viewBox="0 0 14 11"><path d="M0 1.200A1.200 1.200 0 0 1 1.200 0H5L6.500 1.500H12.800A1.200 1.200 0 0 1 14 2.700V9.800A1.200 1.200 0 0 1 12.800 11H1.200A1.200 1.200 0 0 1 0 9.800z" fill="#90a4ae"/></svg><span id="f1">@babel</span></div>
<div class="row" style="top:131px"><svg style="left:21.500px;top:7px" width="5" height="8"><path d="M0 0.500L4 4 0 7.500z" fill="#c0c0c0"/></svg><svg style="left:35px;top:6px" width="14" height="11" viewBox="0 0 14 11"><path d="M0 1.200A1.200 1.200 0 0 1 1.200 0H5L6.500 1.500H12.800A1.200 1.200 0 0 1 14 2.700V9.800A1.200 1.200 0 0 1 12.800 11H1.200A1.200 1.200 0 0 1 0 9.800z" fill="#90a4ae"/></svg><span id="f2">common</span></div>
<div class="row" style="top:153px"><svg style="left:21.500px;top:7px" width="5" height="8"><path d="M0 0.500L4 4 0 7.500z" fill="#c0c0c0"/></svg><svg style="left:35px;top:5.500px" width="16" height="14" viewBox="0 0 16 14"><path d="M0 1.200A1.200 1.200 0 0 1 1.200 0H5L6.500 1.500H12.800A1.200 1.200 0 0 1 14 2.700V8.800A1.200 1.200 0 0 1 12.800 10H1.200A1.200 1.200 0 0 1 0 8.800z" fill="#ff7043"/><rect x="7" y="4.500" width="8" height="8.500" rx="1.500" fill="#ffab91"/><path d="M10.200 7.200L8.700 8.700l1.500 1.500M11.800 7.200l1.500 1.500L11.800 10.200" fill="none" stroke="#e8401c" stroke-width="0.900"/></svg><span id="f3">pages</span></div>
<div class="row" style="top:175px"><svg style="left:21.500px;top:7px" width="5" height="8"><path d="M0 0.500L4 4 0 7.500z" fill="#c0c0c0"/></svg><svg style="left:35px;top:5.500px" width="16" height="14" viewBox="0 0 16 14"><path d="M0 1.200A1.200 1.200 0 0 1 1.200 0H5L6.500 1.500H12.800A1.200 1.200 0 0 1 14 2.700V8.800A1.200 1.200 0 0 1 12.800 10H1.200A1.200 1.200 0 0 1 0 8.800z" fill="#7cb342"/><rect x="7" y="4.500" width="8" height="8.500" rx="1.500" fill="#c5e1a5"/><path d="M11 6.300v5M8.500 8.800h5" fill="none" stroke="#558b2f" stroke-width="1.300"/></svg><span id="f4">utils</span></div>
<div class="row" style="top:197px"><svg style="left:36px;top:5px" width="13" height="12" viewBox="0 0 13 12"><rect width="13" height="12" fill="#f7c325"/><path d="M4.200 5.500v3.800c0 0.800-0.400 1.200-1.200 1.200M9.500 6.200c-0.600-0.600-2.300-0.600-2.300 0.500s2.400 0.800 2.400 2-1.900 1.300-2.600 0.500" fill="none" stroke="#5a4a08" stroke-width="0.900"/></svg><span id="f5">app.js</span></div>
<div class="row selr" style="top:219px"><svg class="jb" viewBox="0 0 17 14"><path d="M4.500 1C3 1 2.500 1.800 2.500 3v2.200C2.500 6.300 2 7 0.800 7 2 7 2.500 7.700 2.500 8.800V11c0 1.200 0.500 2 2 2M12.500 1c1.500 0 2 0.800 2 2v2.200c0 1.100 0.500 1.800 1.700 1.800-1.200 0-1.700 0.700-1.700 1.800V11c0 1.200-0.500 2-2 2" fill="none" stroke="#f5c02a" stroke-width="1.300"/><circle cx="5.800" cy="9.500" r="0.800" fill="#f5c02a"/><circle cx="8.500" cy="9.500" r="0.800" fill="#f5c02a"/><circle cx="11.200" cy="9.500" r="0.800" fill="#f5c02a"/></svg><span id="f6">app.json</span></div>
<div class="row" style="top:241px"><svg style="left:35px;top:4px" width="15" height="14" viewBox="0 0 15 14"><path d="M2.500 0.500H14.500L13 10.500 7.500 13 2 10.500 1.500 7.500H4L4.300 9 7.500 10.300 10.800 9 11.200 6.500H1.500L2 4H11.600L11.900 3H2z" fill="#2d9cf0"/></svg><span id="f7" style="letter-spacing:-0.400px">app.wxss</span></div>
<div class="row" style="top:263px"><svg class="jb" viewBox="0 0 17 14"><path d="M4.500 1C3 1 2.500 1.800 2.500 3v2.200C2.500 6.300 2 7 0.800 7 2 7 2.500 7.700 2.500 8.800V11c0 1.200 0.500 2 2 2M12.500 1c1.500 0 2 0.800 2 2v2.200c0 1.100 0.500 1.800 1.700 1.800-1.200 0-1.700 0.700-1.700 1.800V11c0 1.200-0.500 2-2 2" fill="none" stroke="#f5c02a" stroke-width="1.300"/><circle cx="5.800" cy="9.500" r="0.800" fill="#f5c02a"/><circle cx="8.500" cy="9.500" r="0.800" fill="#f5c02a"/><circle cx="11.200" cy="9.500" r="0.800" fill="#f5c02a"/></svg><span id="f8">project.config.json</span></div>
<div class="row" style="top:285px"><svg class="jb" viewBox="0 0 17 14"><path d="M4.500 1C3 1 2.500 1.800 2.500 3v2.200C2.500 6.300 2 7 0.800 7 2 7 2.500 7.700 2.500 8.800V11c0 1.200 0.500 2 2 2M12.500 1c1.500 0 2 0.800 2 2v2.200c0 1.100 0.500 1.800 1.700 1.800-1.200 0-1.700 0.700-1.700 1.800V11c0 1.200-0.500 2-2 2" fill="none" stroke="#f5c02a" stroke-width="1.300"/><circle cx="5.800" cy="9.500" r="0.800" fill="#f5c02a"/><circle cx="8.500" cy="9.500" r="0.800" fill="#f5c02a"/><circle cx="11.200" cy="9.500" r="0.800" fill="#f5c02a"/></svg><span id="f9" style="letter-spacing:-0.080px">project.private.config.js...</span></div>
<div class="row" style="top:307px"><svg class="jb" viewBox="0 0 17 14"><path d="M4.500 1C3 1 2.500 1.800 2.500 3v2.200C2.500 6.300 2 7 0.800 7 2 7 2.500 7.700 2.500 8.800V11c0 1.200 0.500 2 2 2M12.500 1c1.500 0 2 0.800 2 2v2.200c0 1.100 0.500 1.800 1.700 1.800-1.200 0-1.700 0.700-1.700 1.800V11c0 1.200-0.500 2-2 2" fill="none" stroke="#f5c02a" stroke-width="1.300"/><circle cx="5.800" cy="9.500" r="0.800" fill="#f5c02a"/><circle cx="8.500" cy="9.500" r="0.800" fill="#f5c02a"/><circle cx="11.200" cy="9.500" r="0.800" fill="#f5c02a"/></svg><span id="f10" style="letter-spacing:-0.100px">sitemap.json</span></div>
<!-- outline -->
<div class="sec" style="top:933px;height:17px;background:#383838"><svg style="left:8.500px;top:7px" width="5" height="8"><path d="M0 0.500L4 4 0 7.500z" fill="#c0c0c0"/></svg><span style="top:4.500px">大纲</span></div>
</div>
<style>
#ed{position:absolute;left:701px;top:92px;width:708px;height:649px;background:#2e2e2e;overflow:hidden}
#tabs{position:absolute;left:0;top:0;width:708px;height:30px;background:#383838}
#tab1{position:absolute;left:0;top:0;width:119px;height:30px;background:#2e2e2e}
#crumbs{position:absolute;left:0;top:30px;width:708px;height:23px}
#crumbs .t{font-size:13px;color:#a6a6a6;top:4.500px}
#code{position:absolute;left:0;top:52px;width:708px;height:596px;font-family:"DejaVu Sans Mono","Liberation Mono",monospace;font-size:14.600px}
.ln{position:absolute;left:0;width:708px;height:32px;line-height:31px;white-space:pre}
.ln.cur{background:none}
.no{position:absolute;left:0;width:26.500px;text-align:right;color:#5c5c5c}
.cur .no{color:#c8c8c8}
.cd{position:absolute;left:52px;top:0;letter-spacing:0.010px;-webkit-text-stroke:0.250px currentColor}
.cd i{font-style:normal}
.br{color:#8fd3f0}.ky{color:#c0d0e0}.pn{color:#93cbee}.q{color:#c0d0e0}.st{color:#f37161}
.ig{position:absolute;width:1px;background:#474747}
</style>
<div id="ed">
<div id="tabs"><div id="tab1">
<svg style="left:10px;top:8.500px" width="17" height="14" viewBox="0 0 17 14"><path d="M4.500 1C3 1 2.500 1.800 2.500 3v2.200C2.500 6.300 2 7 0.800 7 2 7 2.500 7.700 2.500 8.800V11c0 1.200 0.500 2 2 2M12.500 1c1.500 0 2 0.800 2 2v2.200c0 1.100 0.500 1.800 1.700 1.800-1.200 0-1.700 0.700-1.700 1.800V11c0 1.200-0.500 2-2 2" fill="none" stroke="#f5c02a" stroke-width="1.300"/><circle cx="5.800" cy="9.500" r="0.800" fill="#f5c02a"/><circle cx="8.500" cy="9.500" r="0.800" fill="#f5c02a"/><circle cx="11.200" cy="9.500" r="0.800" fill="#f5c02a"/></svg>
<span class="t" id="tabname" style="left:32px;top:8.500px;font-size:13px;color:#fff">app.json</span>
<svg style="left:98.500px;top:11px" width="10" height="10" viewBox="0 0 10 10"><path d="M0.500 0.500l9 9M9.500 0.500l-9 9" stroke="#f0f0f0" stroke-width="1.300" fill="none"/></svg>
</div>
<!-- right icons -->
<svg style="left:610px;top:8px" width="16" height="14" viewBox="0 0 16 14"><path d="M4 4V1h6.500L14.500 5v8H4V8" fill="none" stroke="#d8d8d8" stroke-width="1.200"/><path d="M10.500 1v4h4" fill="none" stroke="#d8d8d8" stroke-width="1.200"/><path d="M0.500 3.500h5v3" fill="none" stroke="#d8d8d8" stroke-width="1.200"/><path d="M3 1l-2.500 2.500L3 6" fill="none" stroke="#d8d8d8" stroke-width="1.200"/></svg>
<svg style="left:643px;top:9px" width="13" height="13" viewBox="0 0 13 13"><rect x="0.600" y="0.600" width="11.800" height="11.800" rx="1" fill="none" stroke="#d8d8d8" stroke-width="1.200"/><path d="M6.500 0.600v11.800" stroke="#d8d8d8" stroke-width="1.200"/></svg>
<svg style="left:675px;top:13.500px" width="13" height="3" viewBox="0 0 13 3"><circle cx="1.500" cy="1.500" r="1" fill="#d8d8d8"/><circle cx="6.500" cy="1.500" r="1" fill="#d8d8d8"/><circle cx="11.500" cy="1.500" r="1" fill="#d8d8d8"/></svg>
</div>
<div id="crumbs">
<svg style="left:8px;top:6px" width="15" height="10" viewBox="0 0 15 10"><path d="M0 0.600h1.500M3 0.600h12M0 3.600h1.500M3 3.600h12M0 6.600h1.500M3 6.600h12M0 9.400h1.500M3 9.400h12" stroke="#bdbdbd" stroke-width="1"/></svg>
<svg style="left:40px;top:4.500px" width="11" height="14" viewBox="0 0 11 14"><path d="M0.700 0.700h9.600v12.300L5.500 9 0.700 13z" fill="none" stroke="#bdbdbd" stroke-width="1.300"/></svg>
<svg style="left:69px;top:6px" width="14" height="11" viewBox="0 0 14 11"><path d="M13.500 5.500H1M5.500 0.800L0.800 5.500l4.700 4.700" fill="none" stroke="#bdbdbd" stroke-width="1.200"/></svg>
<svg style="left:97px;top:6px" width="14" height="11" viewBox="0 0 14 11"><path d="M0.500 5.500H13M8.500 0.800l4.700 4.700-4.700 4.700" fill="none" stroke="#5a5a5a" stroke-width="1.200"/></svg>
<svg style="left:126px;top:4.500px" width="17" height="14" viewBox="0 0 17 14"><path d="M4.500 1C3 1 2.500 1.800 2.500 3v2.200C2.500 6.300 2 7 0.800 7 2 7 2.500 7.700 2.500 8.800V11c0 1.200 0.500 2 2 2M12.500 1c1.500 0 2 0.800 2 2v2.200c0 1.100 0.500 1.800 1.700 1.800-1.200 0-1.700 0.700-1.700 1.800V11c0 1.200-0.500 2-2 2" fill="none" stroke="#f5c02a" stroke-width="1.300"/><circle cx="5.800" cy="9.500" r="0.800" fill="#f5c02a"/><circle cx="8.500" cy="9.500" r="0.800" fill="#f5c02a"/><circle cx="11.200" cy="9.500" r="0.800" fill="#f5c02a"/></svg>
<span class="t" id="bc1" style="left:148px">app.json</span>
<svg style="left:201px;top:7px" width="7" height="10" viewBox="0 0 7 10"><path d="M1 0.500L6 5 1 9.500" fill="none" stroke="#a6a6a6" stroke-width="1.200"/></svg>
<span class="t" id="bc2" style="left:213px;letter-spacing:2px">[ ]</span>
<span class="t" id="bc3" style="left:234.500px">pages</span>
</div>
<div id="code">
<div class="abs" style="left:52px;top:224px;width:656px;height:32px;background:#4a4a4a"></div>
<div class="ig" style="left:52px;top:32px;height:564px"></div>
<div class="ig" style="left:70px;top:64px;height:512px"></div>
<div class="abs" style="left:148.500px;top:32px;width:9.500px;height:32px;border:1px solid #8a8a8a;background:#2a3a2a"></div>
<div class="abs" style="left:70.500px;top:576px;width:8px;height:21px;border:1px solid #8a8a8a;background:#2a3a2a"></div>
<svg style="left:34px;top:5.500px" width="11" height="6" viewBox="0 0 11 6"><path d="M0.500 0.500l5 4.500 5-4.500" fill="none" stroke="#c5c5c5" stroke-width="1.200"/></svg>
<svg style="left:34px;top:37.500px" width="11" height="6" viewBox="0 0 11 6"><path d="M0.500 0.500l5 4.500 5-4.500" fill="none" stroke="#c5c5c5" stroke-width="1.200"/></svg>
<div class="ln" style="top:0px"><span class="no">1</span>
<span class="cd"><i class="br">{</i></span></div>
<div class="ln" style="top:32px"><span class="no">2</span>
<span class="cd">&nbsp;&nbsp;<i class="ky">"pages"</i><i class="pn">:</i> <i class="br bm">[</i></span></div>
<div class="ln" style="top:64px"><span class="no">3</span>
<span class="cd">&nbsp;&nbsp;&nbsp;&nbsp;<i class="q">"</i><i class="st">pages/other/other</i><i class="q">"</i><i class="pn">,</i></span></div>
<div class="ln" style="top:96px"><span class="no">4</span>
<span class="cd">&nbsp;&nbsp;&nbsp;&nbsp;<i class="q">"</i><i class="st">pages/eyu/eyu</i><i class="q">"</i><i class="pn">,</i></span></div>
<div class="ln" style="top:128px"><span class="no">5</span>
<span class="cd">&nbsp;&nbsp;&nbsp;&nbsp;<i class="q">"</i><i class="st">pages/dage/dage</i><i class="q">"</i><i class="pn">,</i></span></div>
<div class="ln" style="top:160px"><span class="no">6</span>
<span class="cd">&nbsp;&nbsp;&nbsp;&nbsp;<i class="q">"</i><i class="st">pages/index/index</i><i class="q">"</i><i class="pn">,</i></span></div>
<div class="ln" style="top:192px"><span class="no">7</span>
<span class="cd">&nbsp;&nbsp;&nbsp;&nbsp;<i class="q">"</i><i class="st">pages/zhijian/zhijian</i><i class="q">"</i><i class="pn">,</i></span></div>
<div class="ln cur" style="top:224px"><span class="no">8</span>
<span class="cd">&nbsp;&nbsp;&nbsp;&nbsp;<i class="q">"</i><i class="st">pages/shezhi/shezhi</i><i class="q">"</i><i class="pn">,</i></span></div>
<div class="ln" style="top:256px"><span class="no">9</span>
<span class="cd">&nbsp;&nbsp;&nbsp;&nbsp;<i class="q">"</i><i class="st">pages/gameplay/gameplay</i><i class="q">"</i><i class="pn">,</i></span></div>
<div class="ln" style="top:288px"><span class="no">10</span>
<span class="cd">&nbsp;&nbsp;&nbsp;&nbsp;<i class="q">"</i><i class="st">pages/zhuanpan/zhuanpan</i><i class="q">"</i><i class="pn">,</i></span></div>
<div class="ln" style="top:320px"><span class="no">11</span>
<span class="cd">&nbsp;&nbsp;&nbsp;&nbsp;<i class="q">"</i><i class="st">pages/index3/index</i><i class="q">"</i><i class="pn">,</i></span></div>
<div class="ln" style="top:352px"><span class="no">12</span>
<span class="cd">&nbsp;&nbsp;&nbsp;&nbsp;<i class="q">"</i><i class="st">pages/web/web</i><i class="q">"</i><i class="pn">,</i></span></div>
<div class="ln" style="top:384px"><span class="no">13</span>
<span class="cd">&nbsp;&nbsp;&nbsp;&nbsp;<i class="q">"</i><i class="st">pages/dengguang/dengguang</i><i class="q">"</i><i class="pn">,</i></span></div>
<div class="ln" style="top:416px"><span class="no">14</span>
<span class="cd">&nbsp;&nbsp;&nbsp;&nbsp;<i class="q">"</i><i class="st">pages/danmu/danmu</i><i class="q">"</i><i class="pn">,</i></span></div>
<div class="ln" style="top:448px"><span class="no">15</span>
<span class="cd">&nbsp;&nbsp;&nbsp;&nbsp;<i class="q">"</i><i class="st">pages/select/select</i><i class="q">"</i><i class="pn">,</i></span></div>
<div class="ln" style="top:480px"><span class="no">16</span>
<span class="cd">&nbsp;&nbsp;&nbsp;&nbsp;<i class="q">"</i><i class="st">pages/attributes/attributes</i><i class="q">"</i><i class="pn">,</i></span></div>
<div class="ln" style="top:512px"><span class="no">17</span>
<span class="cd">&nbsp;&nbsp;&nbsp;&nbsp;<i class="q">"</i><i class="st">pages/game/game</i><i class="q">"</i><i class="pn">,</i></span></div>
<div class="ln" style="top:544px"><span class="no">18</span>
<span class="cd">&nbsp;&nbsp;&nbsp;&nbsp;<i class="q">"</i><i class="st">pages/summarize/summarize</i><i class="q">"</i></span></div>
<div class="ln" style="top:576px"><span class="no">19</span>
<span class="cd">&nbsp;&nbsp;<i class="br bm2">]</i><i class="pn">,</i></span></div><!-- scrollbar -->
<div class="abs" style="left:693px;top:0;width:1px;height:596px;background:#505050"></div>
<div class="abs" style="left:694px;top:0;width:14px;height:243px;background:rgba(121,121,121,.4)"></div>
<div class="abs" style="left:694px;top:90px;width:13px;height:2px;background:#8e8e8e"></div>
<div class="abs" style="left:707px;top:0;width:1px;height:596px;background:#282828"></div>
</div>
</div>
<style>
#pn{position:absolute;left:701px;top:740px;width:708px;height:302px;background:#242424;overflow:hidden}
#pn .t{font-size:12px;color:#e4e4e4}
#ptabs{position:absolute;left:0;top:0;width:708px;height:30px;background:#2d2d2d;border-top:1px solid #454545}
#ptabs .t{font-size:11px;color:#8c8c8c;top:10.500px}
#dtb{position:absolute;left:0;top:30px;width:708px;height:27px;background:#292929;border-bottom:1px solid #3d3d3d}
#dtb .t{top:8px}
#crow{position:absolute;left:0;top:57px;width:708px;height:27px;background:#292929;border-bottom:1px solid #4a4a4a}
#crow .t{top:8px}
.mono{font-family:"DejaVu Sans Mono","Liberation Mono",monospace}
#status{position:absolute;left:501px;top:1042px;width:908px;height:28px;background:#383838}
#status .t{font-size:12px;color:#a8a8a8;top:10px}
</style>
<div id="pn">
<div id="ptabs">
<span class="t" style="left:20px">构建</span>
<span class="t" style="left:62px;color:#fff">调试器</span>
<div class="abs" style="left:62px;top:28px;width:33px;height:1px;background:#e8e8e8"></div>
<div class="abs" style="left:103px;top:6px;width:33px;height:18px;border-radius:9px;background:#d14343"></div>
<span class="t" id="badge" style="left:109px;color:#fff;top:9.500px">14, 8</span>
<span class="t" style="left:156px">问题</span>
<span class="t" style="left:198px">输出</span>
<span class="t" style="left:240px">终端</span>
<span class="t" style="left:282px">代码质量</span>
<svg style="left:644px;top:14px" width="11" height="7" viewBox="0 0 11 7"><path d="M0.500 6L5.500 1l5 5" fill="none" stroke="#e0e0e0" stroke-width="1.300"/></svg>
<svg style="left:676px;top:13px" width="10" height="10" viewBox="0 0 10 10"><path d="M0.500 0.500l9 9M9.500 0.500l-9 9" stroke="#e0e0e0" stroke-width="1.300" fill="none"/></svg>
</div>
<div id="dtb">
<svg style="left:10px;top:7px" width="15" height="14" viewBox="0 0 15 14"><path d="M5 12H2a1.500 1.500 0 0 1-1.500-1.500v-8A1.500 1.500 0 0 1 2 1h8.500A1.500 1.500 0 0 1 12 2.500V5" fill="none" stroke="#9a9a9a" stroke-width="1.200"/><path d="M6 5l2.800 8.500 1.500-3.200 3.200-1.500z" fill="#9a9a9a"/></svg>
<div class="abs" style="left:34px;top:5px;width:1px;height:16px;background:#444"></div>
<div class="abs" style="left:41px;top:0;width:54px;height:26px;background:#000"></div>
<span class="t" id="d1" style="left:52.500px;color:#fff">Wxml</span>
<span class="t" id="d2" style="left:106px">Console</span>
<span class="t" id="d3" style="left:172px;letter-spacing:-0.300px">Sources</span>
<span class="t" id="d4" style="left:237.400px;letter-spacing:0.250px">Network</span>
<span class="t" id="d5" style="left:306.400px;letter-spacing:-0.150px">Performance</span>
<span class="t" id="d6" style="left:396.500px">Memory</span>
<svg style="left:462px;top:9px" width="9" height="8" viewBox="0 0 9 8"><path d="M0.500 0.500L4 4 0.500 7.500M4.500 0.500L8 4 4.500 7.500" fill="none" stroke="#bdbdbd" stroke-width="1.100"/></svg>
<svg style="left:553px;top:8px" width="11" height="11" viewBox="0 0 11 11"><circle cx="5.500" cy="5.500" r="5.200" fill="#e3342f"/><path d="M3.500 3.500l4 4M7.500 3.500l-4 4" stroke="#fff" stroke-width="1.300"/></svg>
<span class="t" style="left:567px">14</span>
<svg style="left:585px;top:8px" width="12" height="11" viewBox="0 0 12 11"><path d="M6 0.300L11.700 10.500H0.300z" fill="#f5c518"/><path d="M6 4v3.500M6 8.300v1.200" stroke="#3a2a00" stroke-width="1.200"/></svg>
<span class="t" style="left:599px">8</span>
<div class="abs" style="left:616px;top:5px;width:1px;height:16px;background:#444"></div>
<svg style="left:627px;top:6px" width="15" height="15" viewBox="0 0 15 15"><path d="M6.300 0.500h2.400l0.400 1.900 1.300 0.600 1.700-1 1.700 1.700-1 1.700 0.500 1.300 1.900 0.400v2.400l-1.900 0.400-0.500 1.300 1 1.700-1.700 1.700-1.700-1-1.300 0.500-0.400 1.900H6.300l-0.400-1.900-1.300-0.500-1.700 1-1.700-1.700 1-1.700-0.500-1.300L0.500 8.700V6.300l1.900-0.400 0.500-1.300-1-1.700 1.700-1.700 1.700 1 1.300-0.600z M7.500 5.200a2.300 2.300 0 1 0 0 4.600 2.300 2.300 0 0 0 0-4.600z" fill="#9a9a9a" fill-rule="evenodd"/></svg>
<svg style="left:662px;top:7px" width="3" height="13" viewBox="0 0 3 13"><circle cx="1.500" cy="1.500" r="1.200" fill="#9a9a9a"/><circle cx="1.500" cy="6.500" r="1.200" fill="#9a9a9a"/><circle cx="1.500" cy="11.500" r="1.200" fill="#9a9a9a"/></svg>
<svg style="left:683px;top:7px" width="17" height="14" viewBox="0 0 17 14"><path d="M4 3V0.800h12.200v8H14" fill="none" stroke="#5e5e5e" stroke-width="1.500"/><rect x="0.800" y="4" width="12" height="9" fill="none" stroke="#5e5e5e" stroke-width="1.500"/><path d="M0.800 5h12" stroke="#5e5e5e" stroke-width="2"/></svg>
</div>
<div id="crow">
<div class="abs" style="left:8px;top:7px;width:12px;height:12px;border:1px solid #8a8a8a;border-radius:2px;background:#2e2e2e"></div>
<span class="t" id="comp" style="left:26px;color:#dcdcdc">Composed</span>
<div class="abs" style="left:382px;top:0;width:1px;height:27px;background:#555"></div>
<div class="abs" style="left:383px;top:0;width:50px;height:26px;background:#000"></div>
<span class="t" id="s1" style="left:392.300px;letter-spacing:-0.300px;color:#fff">Styles</span>
<span class="t" id="s2" style="left:442.500px">Computed</span>
<span class="t" id="s3" style="left:519px;letter-spacing:-0.170px">Dataset</span>
<span class="t" id="s4" style="left:578px">Component Data</span>
</div>
<!-- tree -->
<span class="t mono" id="x1" style="left:14px;top:90px;font-size:11px;color:#5db0d7">&lt;pages/other/other&gt;</span>
<svg style="left:17px;top:107.500px" width="6" height="8"><path d="M0 0L5.500 4 0 8z" fill="#9a9a9a"/></svg>
<span class="t mono" id="x2" style="left:25.500px;top:107px;font-size:11px;color:#f0f0f0">#shadow-root</span>
<span class="t mono" id="x3" style="left:14px;top:124px;font-size:11px;color:#5db0d7">&lt;/pages/other/other&gt;</span>
<!-- right pane -->
<div class="abs" style="left:382px;top:84px;width:1px;height:218px;background:#555"></div>
<div class="abs" style="left:383px;top:85px;width:325px;height:26px;background:#292929"></div>
<div class="abs" style="left:386px;top:87px;width:250px;height:20px;background:#212121"></div>
<span class="t" style="left:390.500px;top:92px;color:#8a8a8a">Filter</span>
<span class="t mono" id="cls" style="left:646.500px;top:92px;font-size:11px;font-weight:700;color:#d4d4d4">.cls</span>
<svg style="left:686px;top:92px" width="17" height="17" viewBox="0 0 17 17"><path d="M5 0v10M0 5h10" stroke="#5a5a5a" stroke-width="1.200"/><path d="M16 13v3h-3z" fill="#5a5a5a"/></svg>
<div class="abs" style="left:0;top:279px;width:382px;height:1px;background:#555"></div>
</div>
<div id="status">
<svg style="left:15.500px;top:8px" width="13" height="13" viewBox="0 0 13 13"><circle cx="6.500" cy="6.500" r="5.800" fill="none" stroke="#a8a8a8" stroke-width="1"/><path d="M4.300 4.300l4.400 4.400M8.700 4.300l-4.400 4.400" stroke="#a8a8a8" stroke-width="1"/></svg>
<span class="t" style="left:32px">0</span>
<svg style="left:42.500px;top:8px" width="14" height="12" viewBox="0 0 14 12"><path d="M7 0.800L13.200 11.500H0.800z" fill="none" stroke="#a8a8a8" stroke-width="1"/><path d="M7 4.500v3.500M7 9v1.200" stroke="#a8a8a8" stroke-width="1"/></svg>
<span class="t" style="left:59px">0</span>
<span class="t" id="st1" style="left:665px">行 8，列 28</span>
<span class="t" id="st2" style="left:742.500px">空格: 2</span>
<span class="t" id="st3" style="left:795.500px;letter-spacing:-0.550px">UTF-8</span>
<span class="t" id="st4" style="left:843.300px;letter-spacing:-1.300px">LF</span>
<span class="t" id="st5" style="left:870.500px;letter-spacing:-1px">JSON</span>
</div>
<!-- overlay watermark -->
<span class="t" id="wm" style="left:529px;top:502px;font-size:17px;color:#7e7e7e;letter-spacing:4.400px;z-index:50">流光坞</span><span class="t" id="wm2" style="left:597px;top:501px;font-size:18.500px;color:#7e7e7e;z-index:50;transform-origin:0 0;transform:scaleX(0.924)">liuguangwu.top</span>
</body>
</html>
